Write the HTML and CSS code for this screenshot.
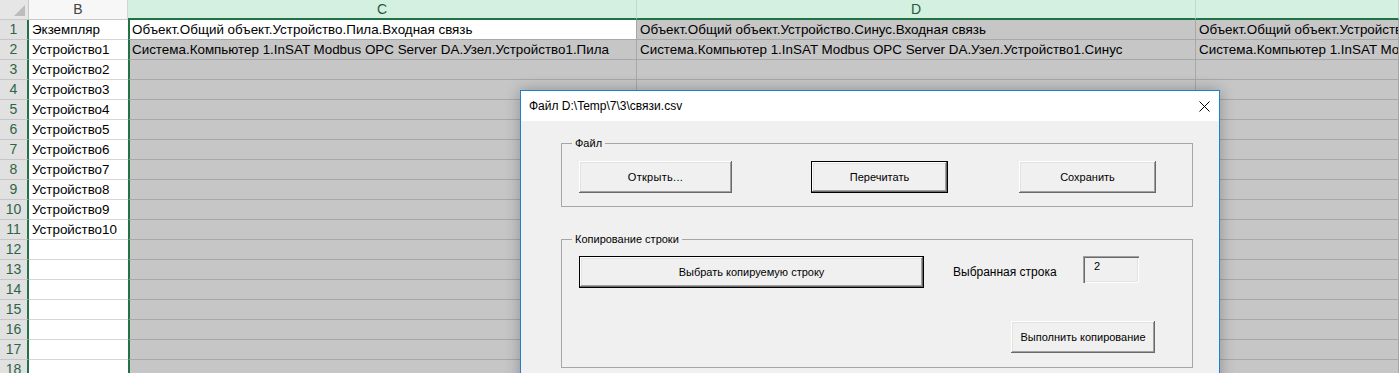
FILE: index.html
```html
<!DOCTYPE html>
<html lang="ru">
<head>
<meta charset="utf-8">
<title>связи.csv</title>
<link rel="stylesheet" href="styles.css">
</head>
<body>
<div class="sheet">
  <div class="row hdr">
    <div class="corner"><span class="tri"></span></div>
    <div class="ch ch-b">B</div>
    <div class="ch sel">C</div>
    <div class="ch sel">D</div>
    <div class="ch sel"></div>
  </div>
  <div class="row"><div class="rh">1</div><div class="c b">Экземпляр</div><div class="c g cc active">Объект.Общий объект.Устройство.Пила.Входная связь</div><div class="c g">Объект.Общий объект.Устройство.Синус.Входная связь</div><div class="c g">Объект.Общий объект.Устройство.Входная связь</div></div>
  <div class="row"><div class="rh">2</div><div class="c b">Устройство1</div><div class="c g cc">Система.Компьютер 1.InSAT Modbus OPC Server DA.Узел.Устройство1.Пила</div><div class="c g">Система.Компьютер 1.InSAT Modbus OPC Server DA.Узел.Устройство1.Синус</div><div class="c g">Система.Компьютер 1.InSAT Modbus OPC Server DA.Узел.Устройство1</div></div>
  <div class="row"><div class="rh">3</div><div class="c b">Устройство2</div><div class="c g cc"></div><div class="c g"></div><div class="c g"></div></div>
  <div class="row"><div class="rh">4</div><div class="c b">Устройство3</div><div class="c g cc"></div><div class="c g"></div><div class="c g"></div></div>
  <div class="row"><div class="rh">5</div><div class="c b">Устройство4</div><div class="c g cc"></div><div class="c g"></div><div class="c g"></div></div>
  <div class="row"><div class="rh">6</div><div class="c b">Устройство5</div><div class="c g cc"></div><div class="c g"></div><div class="c g"></div></div>
  <div class="row"><div class="rh">7</div><div class="c b">Устройство6</div><div class="c g cc"></div><div class="c g"></div><div class="c g"></div></div>
  <div class="row"><div class="rh">8</div><div class="c b">Устройство7</div><div class="c g cc"></div><div class="c g"></div><div class="c g"></div></div>
  <div class="row"><div class="rh">9</div><div class="c b">Устройство8</div><div class="c g cc"></div><div class="c g"></div><div class="c g"></div></div>
  <div class="row"><div class="rh">10</div><div class="c b">Устройство9</div><div class="c g cc"></div><div class="c g"></div><div class="c g"></div></div>
  <div class="row"><div class="rh">11</div><div class="c b">Устройство10</div><div class="c g cc"></div><div class="c g"></div><div class="c g"></div></div>
  <div class="row"><div class="rh">12</div><div class="c b"></div><div class="c g cc"></div><div class="c g"></div><div class="c g"></div></div>
  <div class="row"><div class="rh">13</div><div class="c b"></div><div class="c g cc"></div><div class="c g"></div><div class="c g"></div></div>
  <div class="row"><div class="rh">14</div><div class="c b"></div><div class="c g cc"></div><div class="c g"></div><div class="c g"></div></div>
  <div class="row"><div class="rh">15</div><div class="c b"></div><div class="c g cc"></div><div class="c g"></div><div class="c g"></div></div>
  <div class="row"><div class="rh">16</div><div class="c b"></div><div class="c g cc"></div><div class="c g"></div><div class="c g"></div></div>
  <div class="row"><div class="rh">17</div><div class="c b"></div><div class="c g cc"></div><div class="c g"></div><div class="c g"></div></div>
  <div class="row"><div class="rh">18</div><div class="c b"></div><div class="c g cc"></div><div class="c g"></div><div class="c g"></div></div>
</div>

<div class="dialog">
  <div class="titlebar">
    <span class="title">Файл D:\Temp\7\3\связи.csv</span>
    <svg class="close" width="11" height="11" viewBox="0 0 11 11"><path d="M0.5 0.5 L10.5 10.5 M10.5 0.5 L0.5 10.5" stroke="#000" stroke-width="1" fill="none"/></svg>
  </div>
  <div class="dbody">
    <div class="frame frame1">
      <span class="flabel">Файл</span>
      <div class="btnrow">
        <div class="btn b-open">Открыть...</div>
        <div class="btn def b-reread">Перечитать</div>
        <div class="btn b-save">Сохранить</div>
      </div>
    </div>
    <div class="frame frame2">
      <span class="flabel">Копирование строки</span>
      <div class="copyrow">
        <div class="btn def b-pick">Выбрать копируемую строку</div>
        <div class="lbl">Выбранная строка</div>
        <div class="tbox">2</div>
      </div>
      <div class="execrow">
        <div class="btn b-exec">Выполнить копирование</div>
      </div>
    </div>
  </div>
</div>
</body>
</html>
```
FILE: styles.css
```css
html, body {
  margin: 0;
  padding: 0;
  width: 1399px;
  height: 373px;
  overflow: hidden;
  background: #fff;
}
body {
  position: relative;
  font-family: "Liberation Sans", Arial, sans-serif;
}
.sheet {
  display: flex;
  flex-direction: column;
  font-family: "Liberation Sans", Arial, sans-serif;
  font-size: 13.4px;
  color: #000;
}
.row {
  display: grid;
  grid-template-columns: 29px 99px 509px 559px 1fr;
  height: 20px;
}
.row > div {
  box-sizing: border-box;
  height: 20px;
  white-space: nowrap;
  overflow: hidden;
  line-height: 19px;
}
.corner {
  background: #e6e6e6;
  border-right: 1px solid #c8c8c8;
  border-bottom: 1px solid #c8c8c8;
  display: flex;
  justify-content: flex-end;
  align-items: flex-end;
  padding: 0 3px 3px 0;
}
.tri {
  width: 0;
  height: 0;
  border-left: 11px solid transparent;
  border-bottom: 11px solid #bcbcbc;
}
.ch {
  text-align: center;
  color: #444;
  font-size: 14px;
}
.ch-b {
  background: #f7f7f7;
  border-right: 1px solid #d4d4d4;
  border-bottom: 1px solid #c8c8c8;
}
.ch.sel {
  background: #d3f0e0;
  color: #1e5c3a;
  border-right: 1px solid #c3d9cc;
  border-bottom: 2px solid #217346;
}
.rh {
  background: #e1e1e1;
  border-right: 2px solid #217346;
  border-bottom: 1px solid #c6c6c6;
  color: #2f6447;
  text-align: center;
  font-size: 14px;
}
.c {
  padding-left: 3px;
}
.c.b {
  background: #fff;
  border-bottom: 1px solid #d6d6d6;
}
.c.g {
  background: #c6c6c6;
  border-bottom: 1px solid #a8a8a8;
  border-right: 1px solid #a8a8a8;
}
.c.cc {
  border-left: 2px solid #217346;
  padding-left: 2px;
}
.c.cc.active {
  background: #fff;
  border-bottom-color: #a8a8a8;
}

/* dialog */
.dialog {
  position: absolute;
  left: 520px;
  top: 90px;
  width: 700px;
  height: 300px;
  box-sizing: border-box;
  border: 1px solid #1c7fd2;
  background: #f0f0f0;
  box-shadow: 0 0 14px rgba(0, 0, 0, 0.28);
  font-family: "Liberation Sans", Arial, sans-serif;
  color: #000;
}
.titlebar {
  height: 30px;
  background: #fff;
  display: flex;
  align-items: center;
  justify-content: space-between;
  padding: 0 9px 0 8px;
  font-size: 12px;
}
.close {
  display: block;
  margin-top: 1px;
}
.dbody {
  padding: 22px 0 0 40px;
}
.frame {
  position: relative;
  box-sizing: border-box;
  width: 632px;
  border: 1px solid #a6a6a6;
  font-size: 11px;
}
.flabel {
  position: absolute;
  top: -7px;
  left: 10px;
  padding: 0 3px;
  background: #f0f0f0;
  font-size: 11px;
  line-height: 13px;
}
.frame1 {
  height: 64px;
  padding: 17px 0 0 17px;
}
.frame2 {
  height: 129px;
  margin-top: 32px;
  padding: 16px 0 0 17px;
}
.btnrow, .copyrow {
  display: flex;
  align-items: flex-start;
}
.btn {
  box-sizing: border-box;
  height: 32px;
  display: flex;
  align-items: center;
  justify-content: center;
  background: #f0f0f0;
  font-size: 11px;
  box-shadow: inset -1px -1px 0 #696969, inset 1px 1px 0 #fff, inset -2px -2px 0 #a0a0a0, inset 2px 2px 0 #e3e3e3;
}
.btn.def {
  border: 1px solid #000;
}
.b-open { width: 153px; letter-spacing: 0.3px; }
.b-reread { width: 137px; margin-left: 79px; }
.b-save { width: 137px; margin-left: 71px; }
.b-pick { width: 345px; }
.lbl {
  width: 130px;
  margin-left: 29px;
  align-self: center;
  font-size: 12px;
}
.tbox {
  box-sizing: border-box;
  width: 56px;
  height: 27px;
  padding: 4px 0 0 11px;
  font-size: 11px;
  box-shadow: inset 1px 1px 0 #a0a0a0, inset 2px 2px 0 #696969, inset -1px -1px 0 #fff, inset -2px -2px 0 #e3e3e3;
}
.execrow {
  display: flex;
  margin-top: 33px;
  padding-left: 432px;
}
.b-exec { width: 144px; }
```
